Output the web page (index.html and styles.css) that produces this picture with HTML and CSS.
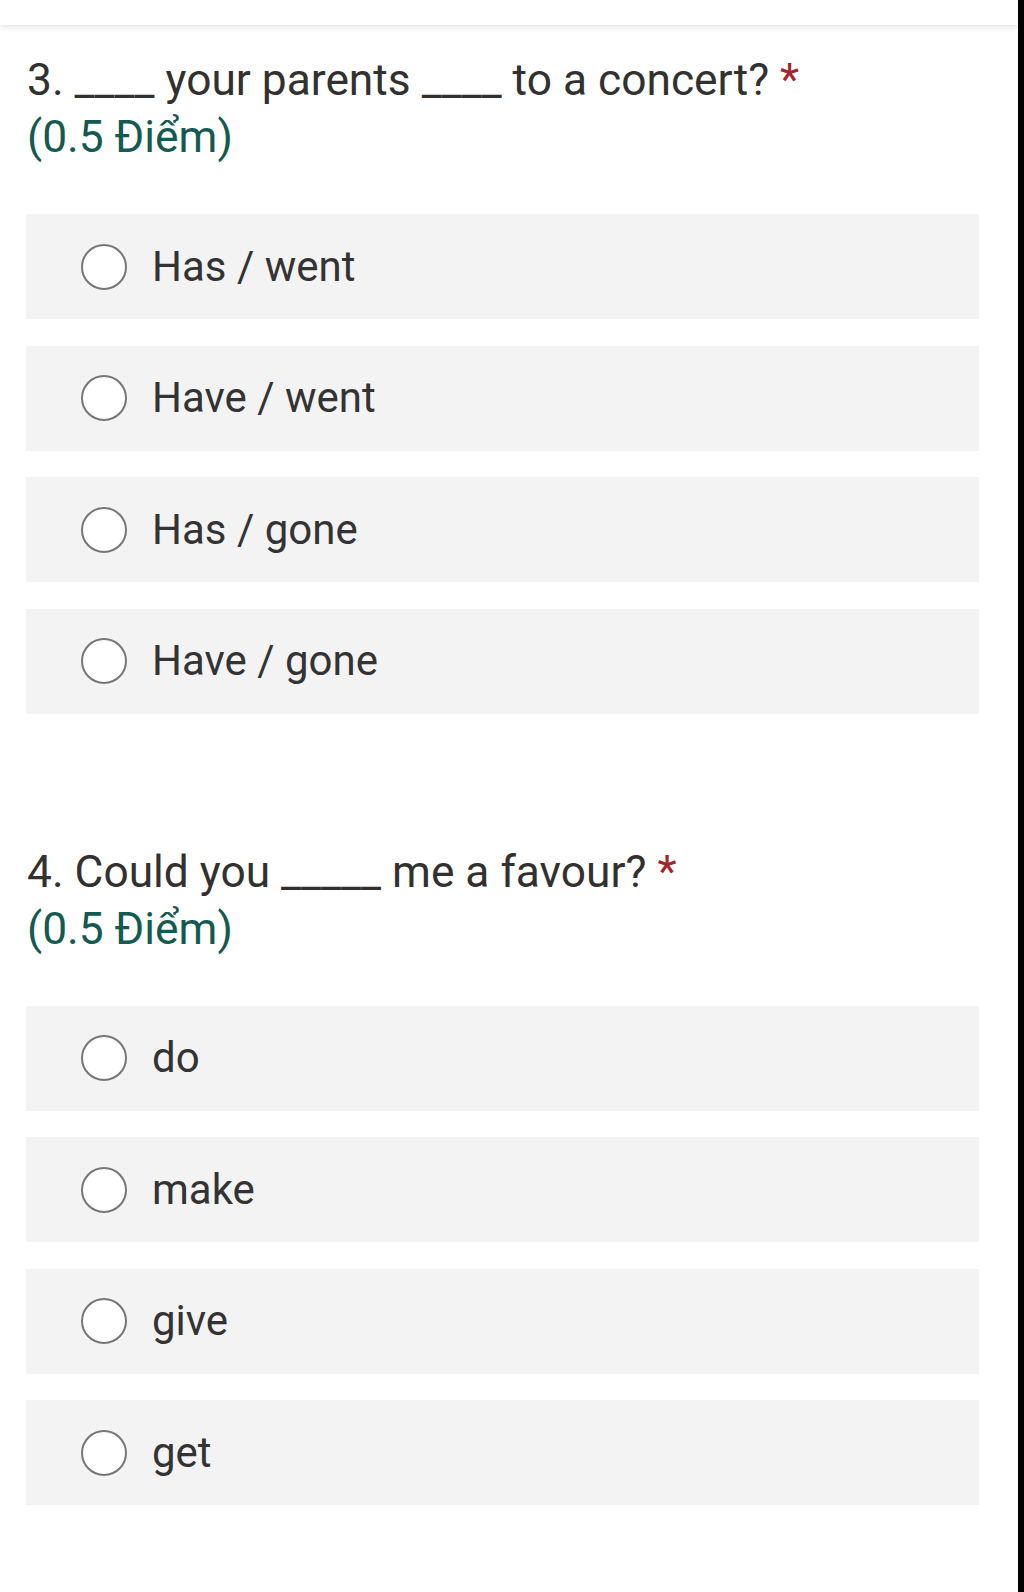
FILE: index.html
```html
<!DOCTYPE html>
<html lang="vi">
<head>
<meta charset="utf-8">
<title>Form</title>
<link rel="stylesheet" href="styles.css">
</head>
<body>
<div class="screen">
  <div class="page">
    <div class="topbar"></div>
    <section class="question">
      <div class="title">
        <div class="q-line">3. ____ your parents ____ to a concert? <span class="req">*</span></div>
        <div class="points">(0.5 Điểm)</div>
      </div>
      <div class="options">
        <label class="option"><span class="radio"></span><span class="opt-text">Has / went</span></label>
        <label class="option"><span class="radio"></span><span class="opt-text">Have / went</span></label>
        <label class="option"><span class="radio"></span><span class="opt-text">Has / gone</span></label>
        <label class="option"><span class="radio"></span><span class="opt-text">Have / gone</span></label>
      </div>
    </section>
    <section class="question">
      <div class="title">
        <div class="q-line">4. Could you _____ me a favour? <span class="req">*</span></div>
        <div class="points">(0.5 Điểm)</div>
      </div>
      <div class="options">
        <label class="option"><span class="radio"></span><span class="opt-text">do</span></label>
        <label class="option"><span class="radio"></span><span class="opt-text">make</span></label>
        <label class="option"><span class="radio"></span><span class="opt-text">give</span></label>
        <label class="option"><span class="radio"></span><span class="opt-text">get</span></label>
      </div>
    </section>
  </div>
  <div class="edge"></div>
</div>
</body>
</html>
```

FILE: styles.css
```css
html, body {
  margin: 0;
  padding: 0;
  background: #ffffff;
}

body {
  font-family: Roboto, "Noto Sans", "Liberation Sans", sans-serif;
  color: #323130;
}

.screen {
  display: flex;
  width: 1024px;
  height: 1592px;
  overflow: hidden;
}

.page {
  width: 1018px;
  flex: none;
  background: #ffffff;
}

.edge {
  flex: 1;
  background: #000000;
}

.topbar {
  height: 25px;
  background: #ffffff;
  box-shadow: 0 2px 6px rgba(0, 0, 0, 0.12);
  position: relative;
  z-index: 1;
}

.question {
  padding: 27px 39px 103px 26px;
}

.title {
  font-size: 44.3px;
  line-height: 57px;
  padding-left: 1px;
}

.q-line {
  white-space: nowrap;
}

.req {
  color: #a4262c;
}

.points {
  color: #145a50;
}

.options {
  margin-top: 48px;
  display: flex;
  flex-direction: column;
  gap: 26.5px;
}

.option {
  height: 105px;
  background: #f3f3f3;
  display: flex;
  align-items: center;
  padding-left: 55px;
}

.radio {
  width: 46px;
  height: 46px;
  box-sizing: border-box;
  border: 2.5px solid #767676;
  border-radius: 50%;
  background: #ffffff;
  flex: none;
}

.opt-text {
  margin-left: 25px;
  font-size: 42px;
  line-height: 50px;
  color: #333333;
}
```
